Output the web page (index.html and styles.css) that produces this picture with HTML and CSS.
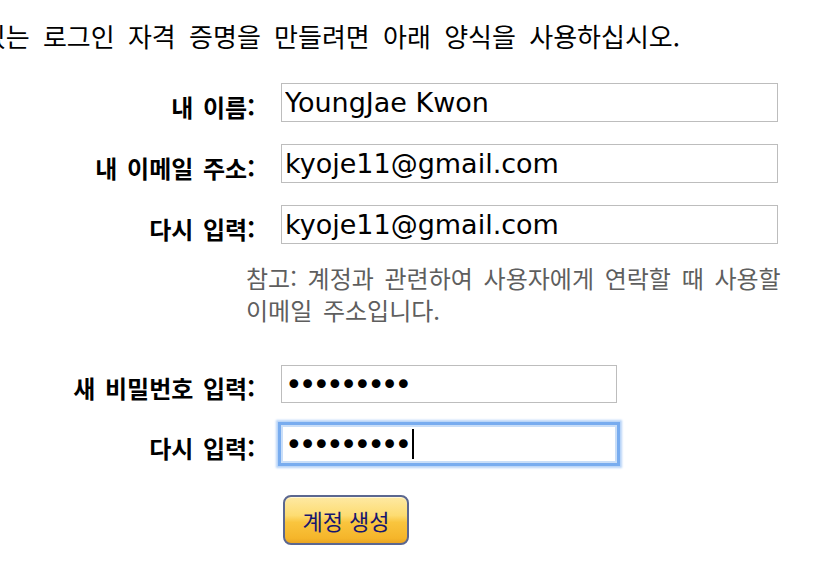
FILE: index.html
```html
<!DOCTYPE html>
<html lang="ko">
<head>
<meta charset="utf-8">
<title>계정 생성</title>
<link rel="stylesheet" href="styles.css">
</head>
<body>
<div class="page">
  <div class="intro"><p class="intro-text">있는 로그인 자격 증명을 만들려면 아래 양식을 사용하십시오.</p></div>
  <form class="form">
    <label class="label" for="name">내 이름:</label>
    <input class="field wide" id="name" type="text" value="YoungJae Kwon" readonly>

    <label class="label" for="email">내 이메일 주소:</label>
    <input class="field wide" id="email" type="text" value="kyoje11@gmail.com" readonly>

    <label class="label" for="email2">다시 입력:</label>
    <input class="field wide" id="email2" type="text" value="kyoje11@gmail.com" readonly>

    <p class="note">참고: 계정과 관련하여 사용자에게 연락할 때 사용할<br>이메일 주소입니다.</p>

    <label class="label gap-top" for="pw">새 비밀번호 입력:</label>
    <input class="field short pw gap-top" id="pw" type="password" value="123456789" readonly>

    <label class="label" for="pw2">다시 입력:</label>
    <div class="focus-wrap">
      <input class="field short pw focused" id="pw2" type="password" value="123456789" readonly>
      <span class="caret"></span>
    </div>

    <div class="actions">
      <button class="btn" type="button">계정 생성</button>
    </div>
  </form>
</div>
</body>
</html>
```
FILE: styles.css
```css
html, body {
  margin: 0;
  padding: 0;
  background: #fff;
  overflow: hidden;
}
body {
  font-family: "Noto Sans CJK KR", "Noto Sans", sans-serif;
  color: #000;
}
.page {
  width: 820px;
  height: 584px;
}
.intro {
  display: flex;
  justify-content: flex-end;
  width: 680px;
  padding-top: 19px;
}
.intro-text {
  flex: none;
  margin: 0;
  white-space: nowrap;
  font-size: 26px;
  line-height: 34px;
  word-spacing: 6px;
}
.form {
  display: grid;
  grid-template-columns: 255px auto;
  column-gap: 26px;
  row-gap: 22px;
  align-items: center;
  margin-top: 30px;
}
.label {
  justify-self: end;
  font-weight: bold;
  font-size: 24px;
  line-height: 28px;
  word-spacing: 3px;
  padding-top: 8px;
}
.field {
  box-sizing: border-box;
  height: 39px;
  margin: 0;
  padding: 0 3px;
  border: 1px solid #bdbdbd;
  border-radius: 0;
  background: #fff;
  font-family: "DejaVu Sans", "Noto Sans", sans-serif;
  font-size: 27px;
  color: #000;
  outline: none;
  justify-self: start;
}
.wide { width: 497px; }
.short { width: 336px; height: 38px; }
.pw {
  font-size: 30px;
  letter-spacing: -4px;
}
.note {
  grid-column: 2;
  margin: -4px 0 0 -35px;
  width: 560px;
  font-size: 24px;
  line-height: 32px;
  color: #5e5e5e;
  word-spacing: 4px;
  white-space: nowrap;
}
.gap-top { margin-top: 17px; }
.focus-wrap {
  position: relative;
  justify-self: start;
  display: flex;
}
.focused {
  border: 2px solid #c9def8;
  padding: 0 2px;
  box-shadow: 0 0 0 3px #78acef, 0 0 2px 5px #b7d4f8;
}
.caret {
  position: absolute;
  left: 131px;
  top: 4px;
  width: 2px;
  height: 30px;
  background: #000;
}
.actions {
  grid-column: 2;
  margin-top: 10px;
}
.btn {
  box-sizing: border-box;
  width: 126px;
  height: 50px;
  margin-left: 2px;
  border: 2px solid #5b6790;
  border-radius: 8px;
  background: linear-gradient(#fee9a3 0%, #fddc72 40%, #f9c53e 55%, #f5b52a 90%, #e9a522 100%);
  box-shadow: inset 0 1px 0 #fff6d4;
  color: #16166f;
  font-family: "Noto Sans CJK KR", "Noto Sans", sans-serif;
  font-size: 22px;
  padding: 0;
  cursor: pointer;
}
```
